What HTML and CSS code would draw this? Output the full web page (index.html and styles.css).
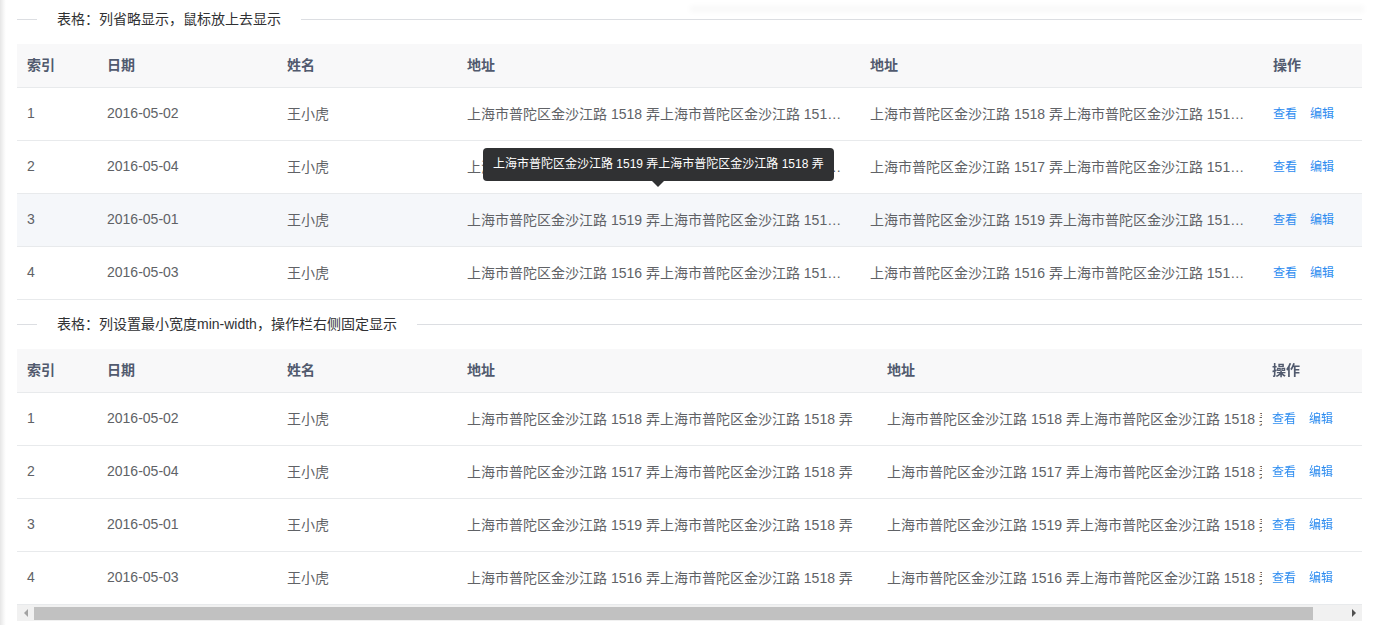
FILE: index.html
```html
<!DOCTYPE html>
<html lang="zh-CN">
<head>
<meta charset="utf-8">
<title>表格</title>
<link rel="stylesheet" href="styles.css">
</head>
<body>
<div class="page">
  <div class="top-shade"></div>

  <div class="divider"><span class="divider-text">表格：列省略显示，鼠标放上去显示</span></div>
  <div class="table-wrap">
    <table class="tbl tbl-ellipsis">
      <colgroup>
        <col class="c-idx"><col class="c-date"><col class="c-name"><col class="c-addr1"><col class="c-addr1"><col class="c-op1">
      </colgroup>
      <thead>
        <tr><th>索引</th><th>日期</th><th>姓名</th><th>地址</th><th>地址</th><th>操作</th></tr>
      </thead>
      <tbody>
        <tr><td>1</td><td>2016-05-02</td><td>王小虎</td><td class="addr">上海市普陀区金沙江路 1518 弄上海市普陀区金沙江路 1518 弄</td><td class="addr">上海市普陀区金沙江路 1518 弄上海市普陀区金沙江路 1518 弄</td><td class="ops"><a>查看</a><a>编辑</a></td></tr>
        <tr><td>2</td><td>2016-05-04</td><td>王小虎</td><td class="addr">上海市普陀区金沙江路 1517 弄上海市普陀区金沙江路 1518 弄</td><td class="addr">上海市普陀区金沙江路 1517 弄上海市普陀区金沙江路 1518 弄</td><td class="ops"><a>查看</a><a>编辑</a></td></tr>
        <tr class="hover"><td>3</td><td>2016-05-01</td><td>王小虎</td><td class="addr">上海市普陀区金沙江路 1519 弄上海市普陀区金沙江路 1518 弄</td><td class="addr">上海市普陀区金沙江路 1519 弄上海市普陀区金沙江路 1518 弄</td><td class="ops"><a>查看</a><a>编辑</a></td></tr>
        <tr><td>4</td><td>2016-05-03</td><td>王小虎</td><td class="addr">上海市普陀区金沙江路 1516 弄上海市普陀区金沙江路 1518 弄</td><td class="addr">上海市普陀区金沙江路 1516 弄上海市普陀区金沙江路 1518 弄</td><td class="ops"><a>查看</a><a>编辑</a></td></tr>
      </tbody>
    </table>
    <div class="tooltip">上海市普陀区金沙江路 1519 弄上海市普陀区金沙江路 1518 弄</div>
  </div>

  <div class="divider"><span class="divider-text">表格：列设置最小宽度min-width，操作栏右侧固定显示</span></div>
  <div class="table-wrap scroll">
    <div class="scroll-body">
      <table class="tbl tbl-wide">
        <colgroup>
          <col class="c-idx"><col class="c-date"><col class="c-name"><col class="c-addr2"><col class="c-addr2"><col class="c-op2">
        </colgroup>
        <thead>
          <tr><th>索引</th><th>日期</th><th>姓名</th><th>地址</th><th>地址</th><th class="fixed">操作</th></tr>
        </thead>
        <tbody>
          <tr><td>1</td><td>2016-05-02</td><td>王小虎</td><td>上海市普陀区金沙江路 1518 弄上海市普陀区金沙江路 1518 弄</td><td>上海市普陀区金沙江路 1518 弄上海市普陀区金沙江路 1518 弄</td><td class="ops fixed"><a>查看</a><a>编辑</a></td></tr>
          <tr><td>2</td><td>2016-05-04</td><td>王小虎</td><td>上海市普陀区金沙江路 1517 弄上海市普陀区金沙江路 1518 弄</td><td>上海市普陀区金沙江路 1517 弄上海市普陀区金沙江路 1518 弄</td><td class="ops fixed"><a>查看</a><a>编辑</a></td></tr>
          <tr><td>3</td><td>2016-05-01</td><td>王小虎</td><td>上海市普陀区金沙江路 1519 弄上海市普陀区金沙江路 1518 弄</td><td>上海市普陀区金沙江路 1519 弄上海市普陀区金沙江路 1518 弄</td><td class="ops fixed"><a>查看</a><a>编辑</a></td></tr>
          <tr><td>4</td><td>2016-05-03</td><td>王小虎</td><td>上海市普陀区金沙江路 1516 弄上海市普陀区金沙江路 1518 弄</td><td>上海市普陀区金沙江路 1516 弄上海市普陀区金沙江路 1518 弄</td><td class="ops fixed"><a>查看</a><a>编辑</a></td></tr>
        </tbody>
      </table>
    </div>
    <div class="hscroll">
      <div class="sb-btn"><span class="sb-arrow-left"></span></div>
      <div class="sb-track"><div class="sb-thumb"></div></div>
      <div class="sb-btn"><span class="sb-arrow-right"></span></div>
    </div>
  </div>
</div>
</body>
</html>
```

FILE: styles.css
```css
html, body {
  margin: 0;
  padding: 0;
  background: #fff;
}

body {
  font-family: "Liberation Sans", "Noto Sans CJK SC", sans-serif;
  font-size: 14px;
  color: #606266;
  background: linear-gradient(to right, #e6e6e6 0, #efefef 2px, #f8f8f8 4px, #fff 6px);
  height: 625px;
  overflow: hidden;
}

.page {
  padding: 0 12px 0 17px;
}

.top-shade {
  height: 0;
  margin-left: 675px;
  box-shadow: 0 0 6px 2px rgba(0, 0, 0, 0.05);
}

.divider {
  display: flex;
  align-items: center;
  height: 20px;
  margin: 9px 0 15px;
  color: #303133;
  font-size: 14px;
  line-height: 20px;
}

.table-wrap + .divider {
  margin-top: 14px;
}

.divider::before {
  content: "";
  width: 20px;
  border-top: 1px solid #dcdee2;
}

.divider::after {
  content: "";
  flex: 1;
  border-top: 1px solid #dcdee2;
}

.divider-text {
  padding: 0 20px;
  white-space: nowrap;
}

.table-wrap {
  position: relative;
}

.scroll-body {
  overflow: hidden;
}

.tbl {
  border-collapse: collapse;
  table-layout: fixed;
}

.tbl-ellipsis {
  width: 1345px;
}

.tbl-wide {
  width: 1380px;
}

.c-idx { width: 80px; }
.c-date { width: 180px; }
.c-name { width: 180px; }
.c-addr1 { width: 403px; }
.c-op1 { width: 99px; }
.c-addr2 { width: 420px; }
.c-op2 { width: 100px; }

.tbl th,
.tbl td {
  padding: 0 10px;
  text-align: left;
  white-space: nowrap;
  overflow: hidden;
  text-overflow: ellipsis;
  border-bottom: 1px solid #e8eaec;
  background: #fff;
}

.tbl th {
  height: 39px;
  padding-bottom: 4px;
  background: #f8f8f9;
  color: #515a6e;
  font-weight: bold;
  font-size: 14px;
}

.tbl td {
  height: 50px;
  padding-bottom: 2px;
}

.tbl td.addr {
  padding-right: 14px;
}

.tbl tr.hover td {
  background: #f5f7fa;
}

.tbl-wide td {
  overflow: visible;
  text-overflow: clip;
}

.tbl-wide .fixed {
  position: sticky;
  right: 0;
  z-index: 2;
  box-shadow: -6px 0 8px -5px rgba(0, 0, 0, 0.12);
}

.tbl td.ops {
  font-size: 12px;
  height: 48px;
  padding-bottom: 4px;
}

.ops a {
  color: #2d8cf0;
  margin-right: 13px;
  cursor: pointer;
}

.hscroll {
  display: flex;
  height: 16px;
  background: #f1f1f1;
}

.sb-btn {
  width: 17px;
  display: flex;
  align-items: center;
  justify-content: center;
}

.sb-arrow-left {
  width: 0;
  height: 0;
  border-top: 4px solid transparent;
  border-bottom: 4px solid transparent;
  border-right: 4px solid #a3a3a3;
}

.sb-arrow-right {
  width: 0;
  height: 0;
  border-top: 4px solid transparent;
  border-bottom: 4px solid transparent;
  border-left: 4px solid #505050;
}

.sb-track {
  flex: 1;
  padding: 2px 32px 1px 0;
}

.sb-thumb {
  height: 100%;
  background: #c1c1c1;
}

.tooltip {
  position: absolute;
  left: 466px;
  top: 104px;
  padding: 8px 10px;
  background: #303133;
  color: #fff;
  font-size: 12px;
  line-height: 17px;
  border-radius: 4px;
  white-space: nowrap;
  z-index: 5;
}

.tooltip::after {
  content: "";
  position: absolute;
  left: 50%;
  bottom: -6px;
  margin-left: -6px;
  border-left: 6px solid transparent;
  border-right: 6px solid transparent;
  border-top: 6px solid #303133;
}
```
